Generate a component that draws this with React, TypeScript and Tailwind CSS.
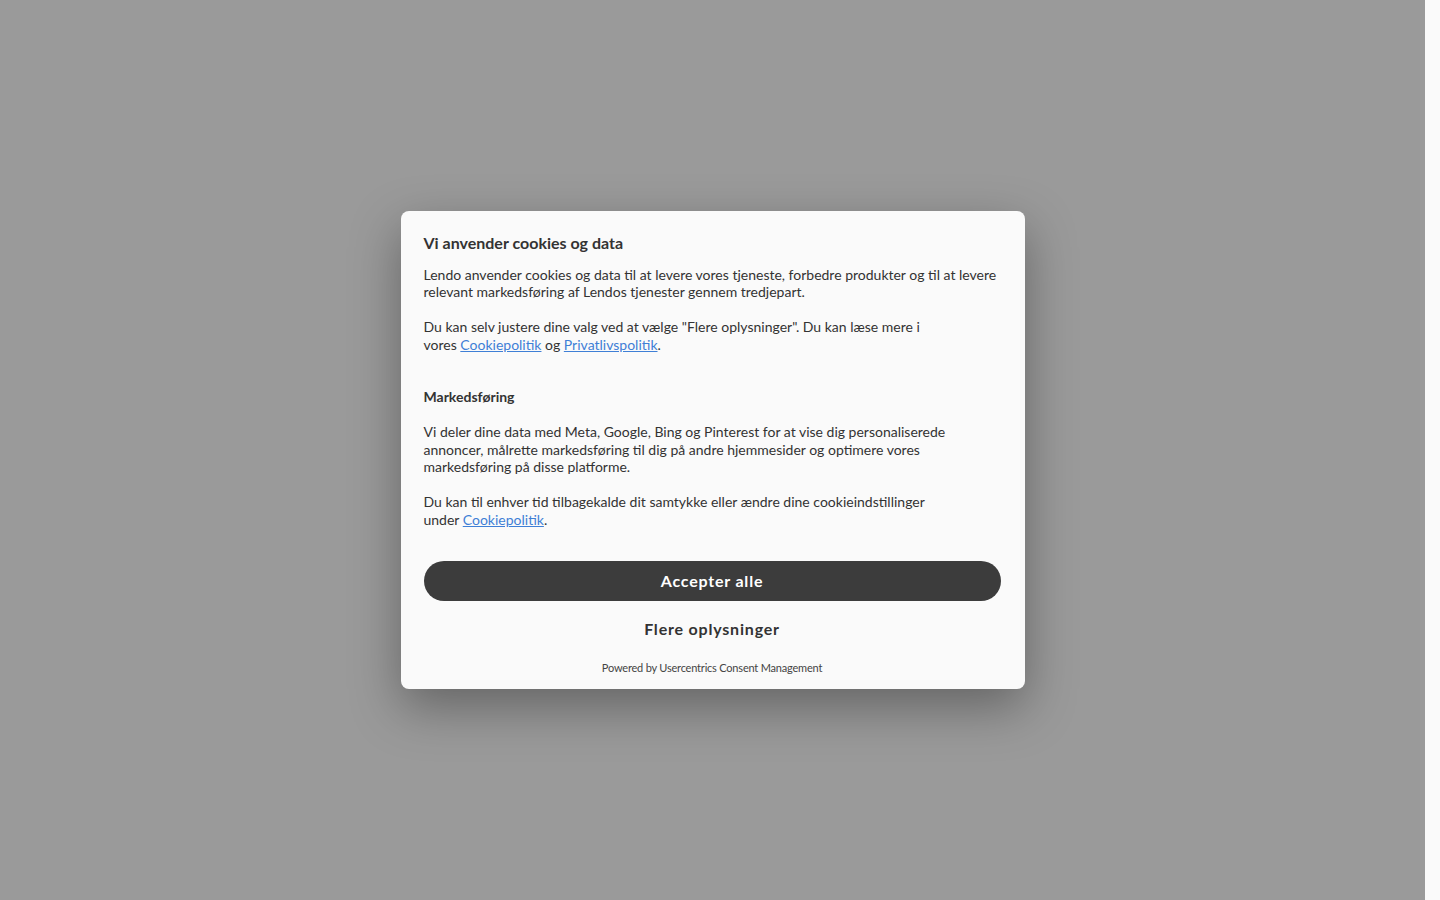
import React from 'react';

const font = { fontFamily: 'Lato, "Noto Sans", sans-serif' };

function Link({ children }: { children: React.ReactNode }) {
  return <a href="#" className="text-[#3f7fd6] underline">{children}</a>;
}

export default function App() {
  return (
    <div className="flex h-[900px] w-full" style={font}>
      <div className="flex flex-1 items-center justify-center bg-[#9a9a9a]">
        <div className="w-[624px] rounded-lg bg-[#fafafa] pl-[23px] pr-6 pt-[22px] pb-[14px] text-[#333] shadow-[0_18px_50px_rgba(0,0,0,0.35)]">
          <h2 className="text-[16px] leading-5 font-bold text-[#333]">Vi anvender cookies og data</h2>
          <div className="mt-[13px] text-[14px] leading-[17.5px]">
            <p>
              Lendo anvender cookies og data til at levere vores tjeneste, forbedre produkter og til at levere relevant markedsføring af Lendos tjenester gennem tredjepart.
            </p>
            <p className="mt-[17.5px] max-w-[500px]">
              Du kan selv justere dine valg ved at vælge "Flere oplysninger". Du kan læse mere i vores <Link>Cookiepolitik</Link> og <Link>Privatlivspolitik</Link>.
            </p>
          </div>
          <h3 className="mt-[35px] text-[14px] leading-[17.5px] font-bold">Markedsføring</h3>
          <div className="mt-[17.5px] text-[14px] leading-[17.5px]">
            <p className="max-w-[530px]">
              Vi deler dine data med Meta, Google, Bing og Pinterest for at vise dig personaliserede annoncer, målrette markedsføring til dig på andre hjemmesider og optimere vores markedsføring på disse platforme.
            </p>
            <p className="mt-[17.5px] max-w-[510px]">
              Du kan til enhver tid tilbagekalde dit samtykke eller ændre dine cookieindstillinger under <Link>Cookiepolitik</Link>.
            </p>
          </div>
          <div className="mt-[33px] flex flex-col gap-2">
            <button className="h-10 w-full rounded-full bg-[#3c3c3c] text-[16px] font-bold tracking-[0.8px] text-white">
              Accepter alle
            </button>
            <button className="h-10 w-full rounded-full text-[16px] font-bold tracking-[0.8px] text-[#333]">
              Flere oplysninger
            </button>
          </div>
          <p className="mt-3 text-center text-[11px] leading-[14px] text-[#444] tracking-[-0.2px]">
            Powered by Usercentrics Consent Management
          </p>
        </div>
      </div>
      <div className="w-[15px] bg-[#fafafa]" />
    </div>
  );
}
